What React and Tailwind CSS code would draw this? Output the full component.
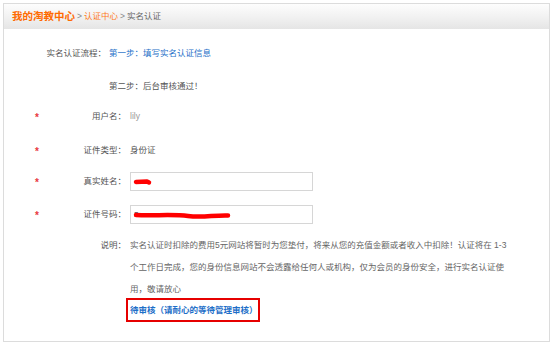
import React from "react";

const FONT = "font-['Liberation_Sans','Noto_Sans_CJK_SC',sans-serif]";

const Star = () => (
  <span className="w-[8px] text-[#e8383d] text-[10px] font-bold leading-none pt-[3px]">*</span>
);

const FieldRow = ({ label, children, className = "" }) => (
  <div className={`flex items-center pl-[31px] ${className}`}>
    <Star />
    <span className="w-[83px] text-right text-[#555]">{label}</span>
    <div className="ml-[4px] flex items-center">{children}</div>
  </div>
);

const Scribble = ({ width, d }) => (
  <svg width={width} height="10" viewBox={`0 0 ${width} 10`} className="absolute left-[2px] top-[4px]">
    <path d={d} stroke="#ff0000" strokeWidth="4.5" strokeLinecap="round" strokeLinejoin="round" fill="none" />
  </svg>
);

export default function App() {
  return (
    <div className={`w-[553px] h-[346px] bg-white p-[3px] ${FONT} text-[8.5px]`}>
      <div className="w-[547px] h-[339px] border border-[#dcdcdc] bg-white flex flex-col">
        {/* Breadcrumb header */}
        <div className="h-[25px] flex items-center pl-[8px] bg-gradient-to-b from-[#fdfdfd] via-[#f2f2f2] to-[#e5e5e5]">
          <span className="text-[#ff6a00] font-bold text-[10.5px]">我的淘教中心</span>
          <span className="text-[#888] ml-[2px]">&gt;</span>
          <span className="text-[#ff7a1a] ml-[2px]">认证中心</span>
          <span className="text-[#888] ml-[2px]">&gt;</span>
          <span className="text-[#666] ml-[2px]">实名认证</span>
        </div>

        <div className="flex flex-col pt-[14px]">
          {/* Process */}
          <div className="flex items-center h-[20px]">
            <span className="w-[102px] text-right text-[#555]">实名认证流程：</span>
            <span className="ml-[3px] text-[#1e6fc8]">第一步：填写实名认证信息</span>
          </div>
          <div className="flex items-center h-[20px] mt-[13px] pl-[105px] text-[#555]">
            第二步：后台审核通过！
          </div>

          <FieldRow label="用户名：" className="h-[20px] mt-[10px]">
            <span className="text-[#999]">lily</span>
          </FieldRow>
          <FieldRow label="证件类型：" className="h-[20px] mt-[14px]">
            <span className="text-[#555]">身份证</span>
          </FieldRow>
          <FieldRow label="真实姓名：" className="h-[19px] mt-[12px]">
            <div className="relative w-[183px] h-[19px] border border-[#d6d6d6] bg-white">
              <Scribble width={20} d="M3 5 L14 4.5 L16 5.5" />
            </div>
          </FieldRow>
          <FieldRow label="证件号码：" className="h-[19px] mt-[14px]">
            <div className="relative w-[183px] h-[19px] border border-[#d6d6d6] bg-white">
              <span className="absolute left-[3px] top-[3px] text-[8px] text-[#223] tracking-[0.5px]">3</span>
              <Scribble width={100} d="M3 5 C20 6, 40 4, 55 6 S 80 5, 95 5.5" />
            </div>
          </FieldRow>

          {/* Notes */}
          <div className="flex mt-[10px]">
            <span className="w-[122px] text-right text-[#555] leading-[22px]">说明：</span>
            <div className="ml-[4px] text-[#666] leading-[22px]">
              实名认证时扣除的费用5元网站将暂时为您垫付，将来从您的充值金额或者收入中扣除！认证将在 1-3
              <br />
              个工作日完成，您的身份信息网站不会透露给任何人或机构，仅为会员的身份安全，进行实名认证使
              <br />
              用，敬请放心
            </div>
          </div>
          <div className="ml-[122px] mt-[-2px] w-[134px] h-[24px] border-2 border-[#e60000] flex items-center pl-[2px]">
            <span className="text-[#1e6fc8] font-bold">待审核（请耐心的等待管理审核）</span>
          </div>
        </div>
      </div>
    </div>
  );
}
